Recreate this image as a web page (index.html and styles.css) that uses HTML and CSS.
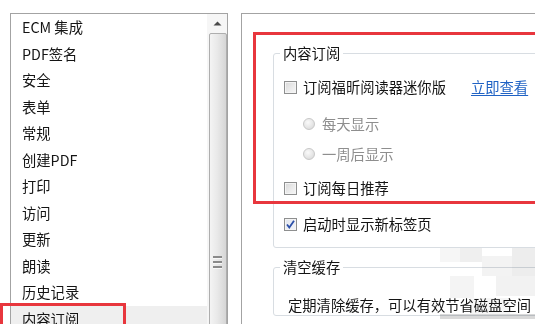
FILE: index.html
```html
<!DOCTYPE html>
<html lang="zh-CN">
<head>
<meta charset="utf-8">
<title>偏好设置 - 内容订阅</title>
<link rel="stylesheet" href="styles.css">
</head>
<body>
<div class="page">
  <div class="listbox">
    <ul class="items">
      <li>ECM 集成</li>
      <li>PDF签名</li>
      <li>安全</li>
      <li>表单</li>
      <li>常规</li>
      <li>创建PDF</li>
      <li>打印</li>
      <li>访问</li>
      <li>更新</li>
      <li>朗读</li>
      <li>历史记录</li>
      <li class="sel">内容订阅</li>
    </ul>
    <div class="scrollbar">
      <div class="sb-up">
        <svg width="9" height="5" viewBox="0 0 9 5"><path d="M0.5 4.5 L4.5 0.5 L8.5 4.5 Z" fill="#4a4a4a"/></svg>
      </div>
      <div class="sb-thumb">
        <div class="grip"><span></span><span></span><span></span></div>
      </div>
    </div>
  </div>

  <div class="panel">
    <fieldset class="group g1">
      <legend>内容订阅</legend>
      <div class="row r1"><span class="cb"></span><span>订阅福昕阅读器迷你版</span><a class="link" href="#">立即查看</a></div>
      <div class="row r2 disabled"><span class="radio"></span><span>每天显示</span></div>
      <div class="row r3 disabled"><span class="radio"></span><span>一周后显示</span></div>
      <div class="row r4"><span class="cb"></span><span>订阅每日推荐</span></div>
      <div class="row r5"><span class="cb checked"><svg width="11" height="11" viewBox="0 0 11 11"><path d="M2 5.5 L4.3 8.5 L9 1.8" fill="none" stroke="#2b4fa8" stroke-width="1.8"/></svg></span><span>启动时显示新标签页</span></div>
    </fieldset>
    <fieldset class="group g2">
      <legend>清空缓存</legend>
      <div class="row r6"><span>定期清除缓存，可以有效节省磁盘空间</span></div>
    </fieldset>
  </div>

  <div class="mark mark-list"></div>
  <div class="mark mark-panel"></div>
  <svg class="noise" width="100" height="80" viewBox="0 0 100 80">
    <rect x="0" y="0" width="20" height="14" fill="#f2f2f2"/>
    <rect x="20" y="0" width="22" height="14" fill="#e9e9e9"/>
    <rect x="42" y="8" width="30" height="20" fill="#eeeeee"/>
    <rect x="72" y="0" width="28" height="28" fill="#e6e6e6"/>
    <rect x="10" y="28" width="24" height="22" fill="#efefef"/>
    <rect x="56" y="28" width="44" height="20" fill="#ececec"/>
    <rect x="0" y="66" width="100" height="5" fill="#c9c9c9"/>
    <rect x="30" y="50" width="40" height="16" fill="#f3f3f3"/>
  </svg>
</div>
</body>
</html>
```

FILE: styles.css
```css
html, body {
  margin: 0;
  padding: 0;
  background: #ffffff;
  overflow: hidden;
}

body {
  font-family: "Noto Sans CJK SC", "Liberation Sans", sans-serif;
  font-size: 14.3px;
  color: #141414;
}

.page {
  position: relative;
  width: 535px;
  height: 324px;
  overflow: hidden;
  display: flex;
  align-items: flex-start;
  gap: 13px;
  padding: 13px 0 0 10px;
  box-sizing: border-box;
}

/* ---------- left list ---------- */
.listbox {
  flex: 0 0 auto;
  width: 218px;
  height: 400px;
  border: 1px solid #a3a3a3;
  box-sizing: border-box;
  display: flex;
  background: #fff;
}

.items {
  flex: 1;
  list-style: none;
  margin: 0;
  padding: 0;
}

.items li {
  height: 26.5px;
  line-height: 26.5px;
  padding-left: 11px;
  white-space: nowrap;
}

.items li.sel {
  background: #efefef;
}

.scrollbar {
  flex: 0 0 20px;
  background: #f6f6f6;
  display: flex;
  flex-direction: column;
  align-items: center;
}

.sb-up {
  height: 22px;
  width: 18px;
  display: flex;
  align-items: center;
  justify-content: center;
}

.sb-thumb {
  width: 18px;
  height: 400px;
  margin-left: 1px;
  box-sizing: border-box;
  border: 1px solid #aeaeae;
  border-radius: 2px;
  background: linear-gradient(to right, #f4f4f4 0%, #e9e9e9 45%, #d6d6d6 100%);
  display: flex;
  flex-direction: column;
  align-items: center;
  padding-top: 222px;
}

.grip {
  display: flex;
  flex-direction: column;
  gap: 2px;
}

.grip span {
  display: block;
  width: 9px;
  height: 2px;
  background: #8a8a8a;
  border-bottom: 1px solid #f8f8f8;
}

/* ---------- right panel ---------- */
.panel {
  flex: 0 0 auto;
  width: 330px;
  height: 400px;
  border: 1px solid #a3a3a3;
  box-sizing: border-box;
  background: #fff;
  display: flex;
  flex-direction: column;
}

.group {
  margin: 0 0 0 31px;
  width: 320px;
  border: 1px solid #d8dde2;
  border-radius: 3px;
  padding: 0 0 0 10px;
  min-width: 0;
}

.group legend {
  padding: 0 3px;
  margin-left: -4px;
  line-height: 18px;
}

.g1 {
  margin-top: 30px;
  padding-bottom: 13px;
}

.g2 {
  margin-top: 10px;
}

.row {
  display: flex;
  align-items: center;
  height: 20px;
  line-height: 20px;
  white-space: nowrap;
}

.r1 { margin-top: 15px; }
.r2 { margin-top: 17px; padding-left: 19px; }
.r3 { margin-top: 10px; padding-left: 19px; }
.r4 { margin-top: 14px; }
.r5 { margin-top: 16px; }
.r6 { margin-top: 19px; padding-left: 4px; }

.disabled {
  color: #8e8e8e;
}

.cb {
  width: 13px;
  height: 13px;
  box-sizing: border-box;
  border: 1px solid #8e8f8f;
  background: linear-gradient(135deg, #d8d8d8 0%, #ececec 60%, #f6f6f6 100%);
  box-shadow: inset 0 0 0 1px #f4f4f4;
  margin-right: 6px;
  display: flex;
  align-items: center;
  justify-content: center;
  flex: 0 0 auto;
}

.cb.checked {
  background: linear-gradient(135deg, #e2e6ee 0%, #f2f4f8 100%);
}

.radio {
  width: 12px;
  height: 12px;
  border-radius: 50%;
  box-sizing: border-box;
  border: 1px solid #c8c8c8;
  background: radial-gradient(circle at 40% 35%, #fafafa 0%, #e4e4e4 60%, #d4d4d4 100%);
  margin-right: 7px;
  flex: 0 0 auto;
}

.link {
  margin-left: 25px;
  color: #1f62c4;
  text-decoration: underline;
  text-underline-offset: 2px;
}

/* ---------- annotation overlays ---------- */
.mark {
  position: absolute;
  border: 3px solid #e8363d;
  box-sizing: border-box;
}

.mark-list {
  left: 0;
  top: 303px;
  width: 126px;
  height: 40px;
}

.mark-panel {
  left: 253px;
  top: 32px;
  width: 300px;
  height: 172px;
}

.noise {
  position: absolute;
  left: 440px;
  top: 248px;
  opacity: 0.7;
  mix-blend-mode: multiply;
}
```
